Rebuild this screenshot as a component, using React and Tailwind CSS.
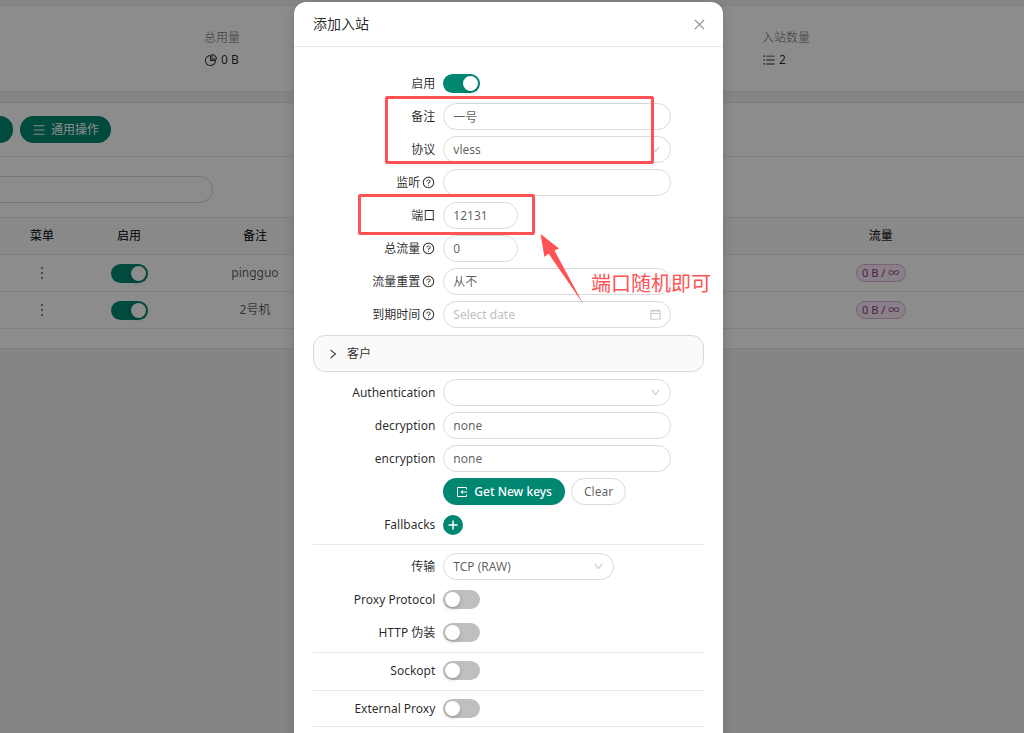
import { useState } from 'react'
import {
  AiOutlineBars,
  AiOutlineCalendar,
  AiOutlineClose,
  AiOutlineDown,
  AiOutlineMenu,
  AiOutlineMore,
  AiOutlinePieChart,
  AiOutlineQuestionCircle,
  AiOutlineRight,
} from 'react-icons/ai'

const inbounds = [
  { id: 1, remark: 'pingguo', traffic: '0 B / ∞' },
  { id: 2, remark: '2号机', traffic: '0 B / ∞' },
]

const control = 'h-[27px] rounded-full border border-[#d9d9d9] bg-white px-[9px] text-black/65 outline-none'

function ImportIcon() {
  return (
    <svg className="h-3 w-3" viewBox="0 0 12 12" fill="none" stroke="currentColor">
      <path d="M10.500 3.500 V1.500 H1.500 V10.500 H10.500 V8.500" />
      <path d="M11 6 H6" />
      <path d="M7 4 L4.300 6 L7 8 Z" fill="currentColor" stroke="none" />
    </svg>
  )
}

function PlusIcon() {
  return (
    <svg className="h-[10px] w-[10px]" viewBox="0 0 10 10" fill="none" stroke="currentColor" strokeWidth="1.5">
      <path d="M5 0.500 V9.500 M0.500 5 H9.500" />
    </svg>
  )
}

function Switch({ id, label, defaultChecked = false }) {
  return (
    <input
      id={id}
      type="checkbox"
      role="switch"
      aria-label={label}
      defaultChecked={defaultChecked}
      className="relative block h-[19px] w-[37px] cursor-pointer appearance-none rounded-full bg-black/25 after:absolute after:left-[2px] after:top-[2px] after:h-[15px] after:w-[15px] after:rounded-full after:bg-white after:shadow-[0_2px_4px_rgba(0,35,11,0.2)] checked:bg-[#008771] checked:after:left-[20px]"
    />
  )
}

function Field({ id, label, help, children }) {
  return (
    <div className="grid h-[33px] grid-cols-[8fr_14fr_2fr] items-center">
      <label htmlFor={id} className="flex items-center justify-end gap-[2px] whitespace-nowrap pr-2 text-black/85">
        {label}
        {help && <AiOutlineQuestionCircle className="h-[13px] w-[13px]" />}
      </label>
      <div>{children}</div>
    </div>
  )
}

function Select({ id, options, width = 'w-full', arrow = true }) {
  return (
    <div className={`relative ${width}`}>
      <select id={id} className={`${control} block w-full appearance-none`}>
        {options.map((o) => (
          <option key={o}>{o}</option>
        ))}
      </select>
      {arrow && <AiOutlineDown className="pointer-events-none absolute right-[10px] top-2 h-[11px] w-[11px] text-black/25" />}
    </div>
  )
}

function Stat({ title, icon, value }) {
  return (
    <div>
      <p className="mb-[2px] leading-5 text-black/45">{title}</p>
      <p className="flex items-center gap-[3px] leading-5 text-black/85">
        {icon}
        {value}
      </p>
    </div>
  )
}

function InboundsPage() {
  return (
    <div className="pt-[5px]">
      <section className="grid grid-cols-[204fr_558fr_262fr] border-y border-[#e8e8e8] bg-white pb-[21px] pt-[22px]">
        <span />
        <Stat title="总用量" icon={<AiOutlinePieChart className="h-[14px] w-[14px]" />} value="0 B" />
        <Stat title="入站数量" icon={<AiOutlineBars className="h-[14px] w-[14px]" />} value="2" />
      </section>

      <section className="mt-[10px] border-y border-[#e8e8e8] bg-white pb-[19px]">
        <div className="flex gap-[7px] border-b border-[#e8e8e8] py-[13px]">
          <button aria-label="添加入站" className="h-[27px] w-[13px] rounded-r-full bg-[#008771]" />
          <button className="flex h-[27px] items-center gap-[5px] rounded-full bg-[#008771] px-3 text-white">
            <AiOutlineMenu className="h-[14px] w-[14px]" />
            通用操作
          </button>
        </div>
        <div className="pb-[14px] pt-[19px]">
          <input
            type="search"
            aria-label="搜索"
            className="block h-[27px] w-[213px] appearance-none rounded-r-full border border-l-0 border-[#d9d9d9] bg-white px-3 outline-none"
          />
        </div>
        <table className="w-full table-fixed border-t border-[#e8e8e8] text-center">
          <colgroup>
            <col className="w-[8.2%]" />
            <col className="w-[8.8%]" />
            <col className="w-[15.8%]" />
            <col />
            <col className="w-[28%]" />
          </colgroup>
          <thead>
            <tr className="h-[37px] border-b border-[#e8e8e8] bg-[#fafafa] text-black/85">
              <th className="font-medium">菜单</th>
              <th className="font-medium">启用</th>
              <th className="font-medium">备注</th>
              <th />
              <th className="font-medium">流量</th>
            </tr>
          </thead>
          <tbody>
            {inbounds.map((row) => (
              <tr key={row.id} className="h-[37px] border-b border-[#e8e8e8]">
                <td>
                  <button aria-label="菜单" className="block w-full">
                    <AiOutlineMore className="mx-auto h-[18px] w-[18px]" />
                  </button>
                </td>
                <td>
                  <div className="flex justify-center">
                    <Switch label={row.remark} defaultChecked />
                  </div>
                </td>
                <td>{row.remark}</td>
                <td />
                <td>
                  <span className="mx-auto block h-[18px] w-[50px] rounded-full border border-[#d8b4d6] bg-[#fbe9f8] text-[11px] leading-4 text-[#8a3a80]">
                    {row.traffic}
                  </span>
                </td>
              </tr>
            ))}
          </tbody>
        </table>
      </section>
    </div>
  )
}

// Red marks drawn over the form: two frames, an arrow and a note
function Annotations() {
  return (
    <div className="pointer-events-none absolute inset-0">
      <div className="absolute left-[91px] top-[94px] h-[68px] w-[269px] rounded-xs border-3 border-[#ff5254]" />
      <div className="absolute left-[64px] top-[192px] h-[41px] w-[177px] rounded-xs border-3 border-[#ff5254]" />
      <svg className="absolute left-[245px] top-[231px] h-[72px] w-[46px]" viewBox="0 0 46 72" fill="#ff5254">
        <path d="M1.500 1 L20 15.500 L15.500 17.500 L44.300 71 L9.500 20.500 L5.500 24 Z" />
      </svg>
      <p className="absolute left-[297px] top-[268px] whitespace-nowrap text-[20px] leading-7 text-[#ff5254]">端口随机即可</p>
    </div>
  )
}

function AddInboundModal() {
  const [port, setPort] = useState('12131')

  return (
    <div role="dialog" aria-label="添加入站" className="relative mt-[2px] h-fit w-[429px] rounded-xl bg-white shadow-[0_4px_12px_rgba(0,0,0,0.15)]">
      <div className="flex h-[45px] items-center justify-between border-b border-[#e8e8e8] pl-[19px] pr-4">
        <h2 className="text-[14px] text-black/85">添加入站</h2>
        <button aria-label="关闭" className="text-black/45">
          <AiOutlineClose className="h-[15px] w-[15px]" />
        </button>
      </div>

      <form className="px-[19px] pb-20 pt-5">
        <Field id="enable" label="启用">
          <Switch id="enable" defaultChecked />
        </Field>
        <Field id="remark" label="备注">
          <input id="remark" defaultValue="一号" className={`${control} block w-full`} />
        </Field>
        <Field id="protocol" label="协议">
          <Select id="protocol" options={['vless']} />
        </Field>
        <Field id="listen" label="监听" help>
          <input id="listen" className={`${control} block w-full`} />
        </Field>
        <Field id="port" label="端口">
          <input id="port" value={port} onChange={(e) => setPort(e.target.value)} className={`${control} block w-[75px]`} />
        </Field>
        <Field id="total" label="总流量" help>
          <input id="total" defaultValue="0" className={`${control} block w-[75px]`} />
        </Field>
        <Field id="reset" label="流量重置" help>
          <Select id="reset" options={['从不']} arrow={false} />
        </Field>
        <Field id="expiry" label="到期时间" help>
          <div className="relative">
            <input id="expiry" placeholder="Select date" className={`${control} block w-full placeholder:text-[#bfbfbf]`} />
            <AiOutlineCalendar className="absolute right-[9px] top-[7px] h-[13px] w-[13px] text-black/25" />
          </div>
        </Field>

        <button type="button" className="my-1 flex h-[37px] w-full items-center gap-2 rounded-xl border border-[#d9d9d9] bg-[#fafafa] px-[13px] text-black/85">
          <AiOutlineRight className="h-3 w-3" />
          客户
        </button>

        <Field id="auth" label="Authentication">
          <Select id="auth" options={['']} />
        </Field>
        <Field id="decryption" label="decryption">
          <input id="decryption" defaultValue="none" className={`${control} block w-full`} />
        </Field>
        <Field id="encryption" label="encryption">
          <input id="encryption" defaultValue="none" className={`${control} block w-full`} />
        </Field>
        <Field>
          <div className="flex gap-[6px]">
            <button type="button" className="flex h-[27px] items-center gap-[6px] whitespace-nowrap rounded-full bg-[#008771] px-[13px] font-medium text-white">
              <ImportIcon />
              Get New keys
            </button>
            <button type="button" className="h-[27px] rounded-full border border-[#d9d9d9] bg-white px-3">
              Clear
            </button>
          </div>
        </Field>
        <Field id="fallbacks" label="Fallbacks">
          <button id="fallbacks" type="button" aria-label="添加" className="flex h-5 w-5 items-center justify-center rounded-full bg-[#008771] text-white">
            <PlusIcon />
          </button>
        </Field>

        <hr className="mb-[5px] mt-[3px] border-[#e8e8e8]" />
        <Field id="network" label="传输">
          <Select id="network" options={['TCP (RAW)']} width="w-[171px]" />
        </Field>
        <Field id="proxyProtocol" label="Proxy Protocol">
          <Switch id="proxyProtocol" />
        </Field>
        <Field id="httpObfs" label="HTTP 伪装">
          <Switch id="httpObfs" />
        </Field>

        <hr className="mb-px mt-[3px] border-[#e8e8e8]" />
        <Field id="sockopt" label="Sockopt">
          <Switch id="sockopt" />
        </Field>

        <hr className="mb-px mt-[3px] border-[#e8e8e8]" />
        <Field id="externalProxy" label="External Proxy">
          <Switch id="externalProxy" />
        </Field>
        <hr className="mt-px border-[#e8e8e8]" />
      </form>

      <Annotations />
    </div>
  )
}

export default function App() {
  return (
    <div className="relative h-screen overflow-hidden bg-[#f0f2f5] font-['Noto_Sans','Noto_Sans_CJK_SC',sans-serif] text-[12px] leading-[18px] text-black/65">
      <InboundsPage />
      <div className="absolute inset-0 flex justify-center overflow-hidden bg-black/45 pr-[7px]">
        <AddInboundModal />
      </div>
    </div>
  )
}
